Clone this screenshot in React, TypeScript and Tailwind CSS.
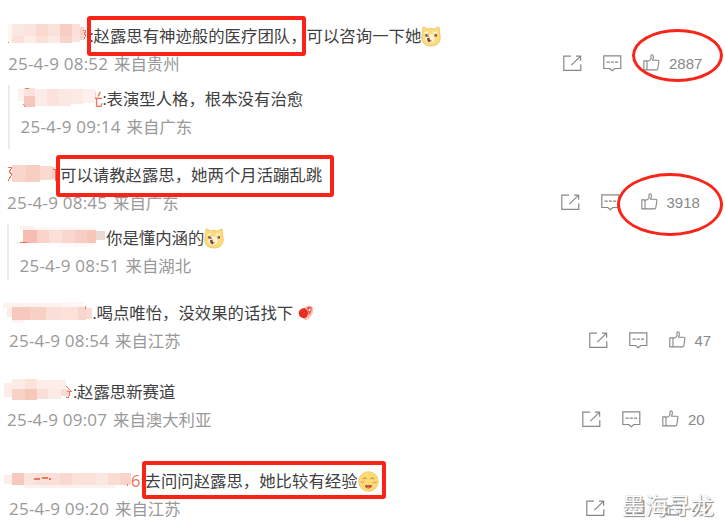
import type { ReactNode } from "react";

type Tile = [x: number, y: number, w: number, h: number, color: string];

function Mosaic({ tiles, children }: { tiles: Tile[]; children?: ReactNode }) {
  return (
    <svg className="h-7 w-full" shapeRendering="crispEdges" aria-hidden="true">
      {tiles.map(([x, y, w, h, color], i) => (
        <rect key={i} x={x} y={y} width={w} height={h} fill={color} />
      ))}
      {children}
    </svg>
  );
}

function DogeIcon() {
  return (
    <svg className="h-[21px] w-5 shrink-0" viewBox="0 0 20 21">
      <path
        d="M1.2 8 L2 1.2 Q3 .2 6.2 3 Q10 1.8 14 3 Q17 .2 18 1.2 L18.8 8 Q20 12 18.5 15.5 Q16 20 10 20 Q4 20 1.4 15.5 Q0 12 1.2 8Z"
        fill="#fbdc7c"
        stroke="#edc05e"
        strokeWidth=".8"
      />
      <ellipse cx="9" cy="12.5" rx="4.8" ry="4.6" fill="#fff3d2" />
      <path d="M3.4 7 7 6M11.8 6.4 16 6.6" stroke="#fff6dd" strokeWidth="1.6" />
      <path d="M4 8.2h3.6v2.6H4.6zM12.8 8.2h3.2v2.4h-2.6z" fill="#8c4a3a" />
      <path d="M6.4 8.2h1.2v1.2H6.4zM12.6 8.2h1.2v1.2h-1.2z" fill="#fff" />
      <path d="M6 12.2 8.8 11.6 8.4 13.2 10 14.8 8.6 16.4 6.4 15Z" fill="#7d4232" />
      <path d="M9.4 14 11 15.2" stroke="#d98c74" strokeWidth="1" />
    </svg>
  );
}

function SmileIcon() {
  return (
    <svg className="h-[21px] w-[21px] shrink-0" viewBox="0 0 21 21">
      <circle cx="10.5" cy="10.5" r="9.8" fill="#fcdb75" stroke="#eec468" strokeWidth=".8" />
      <path d="M5 8Q6.8 5.6 8.4 7.8M12.6 7.8Q14.2 5.6 16 8" fill="none" stroke="#9b6b3a" strokeWidth=".9" />
      <path d="m2.6 12 1.4-1.8M4.6 12.4 6 10.4M15 12.4l1.4-2M17 12.4l1.4-2" stroke="#f28563" strokeWidth="1" />
      <path d="M6.8 14.2h7.4q-1 3.2-3.7 3.2T6.8 14.2Z" fill="#b8402f" />
      <path d="M8.4 16.2q2.1-1.2 4.2 0-2.1 1.8-4.2 0Z" fill="#f4685b" />
    </svg>
  );
}

function MeatIcon() {
  return (
    <svg className="ml-[5px] h-4 w-4 shrink-0" viewBox="0 0 16 16">
      <path d="M1 7Q2 3.5 6 3Q8 .8 11.5 .6Q15.4 1.4 15.4 5Q15 10 10.6 14Q7 16.4 5 13.4Q.2 11 1 7Z" fill="#fbc2b7" />
      <path d="M.8 6.8Q2.6 2.8 6.8 3.2Q10 5 10 8Q9.8 12.4 6.6 13.2Q1.6 12.8 .8 9Z" fill="#e92c20" />
      <path d="M8.6 3Q11 .8 13.4 2.2Q14.6 6 10.6 10.6Q11 5.4 8.6 3Z" fill="#e94b3e" />
      <path d="m10.6 4.2 1.8-1 .2 2-1.4 1.4Z" fill="#fff" />
      <path d="m3 7 2-2M5 9l2-2" stroke="#f9604f" strokeWidth=".7" />
    </svg>
  );
}

function ShareIcon() {
  return (
    <svg className="h-[17px] w-[19px]" viewBox="0 0 19 17" fill="none" stroke="#888" strokeWidth="1.2">
      <path d="M8 1.2H.8v14.2h17V9.2M13 1.2h4.6v4.6M8.3 10.1 17.4 1.4" />
    </svg>
  );
}

function CommentIcon() {
  return (
    <svg className="h-[17px] w-[19px]" viewBox="0 0 19 17" fill="none" stroke="#888" strokeWidth="1.2">
      <path d="M.8.9h17v12.6h-6l-2.5 2.3-2.5-2.3h-6ZM3.6 7.2h3.1M7.8 7.2h3.1M12 7.2h3.1" />
    </svg>
  );
}

function LikeIcon() {
  return (
    <svg
      className="h-[17px] w-[17px]"
      viewBox="0 0 17 17"
      fill="none"
      stroke="#888"
      strokeWidth="1.1"
      strokeLinejoin="round"
    >
      <path d="M.8 6.9H4v9H.8ZM4 7.4 6.7 6.5 8 4.6V2Q8 .7 9.1.8T10.3 2.2V4L9.5 6.2h5.1q1.5.2 1.3 1.5l-1.1 7q-.3 1.2-1.4 1.2H4" />
    </svg>
  );
}

function Actions({ likes }: { likes: string }) {
  return (
    <div className="flex h-7 items-center">
      <span className="-mt-0.5 flex">
        <ShareIcon />
      </span>
      <span className="-mt-0.5 ml-[21px] flex">
        <CommentIcon />
      </span>
      <span className="-mt-[3px] ml-[21px] flex">
        <LikeIcon />
      </span>
      <span className="ml-[9px] font-['Liberation_Sans',sans-serif] text-[15px] text-[#888]">{likes}</span>
    </div>
  );
}

type CommentProps = {
  className: string;
  nameWidth: string;
  name: ReactNode;
  sep?: string;
  text: string;
  emoji?: ReactNode;
  dateClass: string;
  time: string;
  place: string;
  likes?: string;
};

function Comment({ className, nameWidth, name, sep, text, emoji, dateClass, time, place, likes }: CommentProps) {
  return (
    <section className={className}>
      <div className="flex h-7 items-center text-[16.4px] leading-7 text-[#404040]">
        <div className={`${nameWidth} flex h-7 shrink-0 justify-end`}>
          <div className="h-7 w-full min-w-0">{name}</div>
          {sep && <span className="w-1 shrink-0 text-center">{sep}</span>}
        </div>
        <span>{text}</span>
        {emoji}
      </div>
      <div className="flex h-7 items-center">
        <div className={`${dateClass} flex shrink-0 text-[#999]`}>
          <span className="w-[106px] text-[17px] leading-7 tracking-[0.22px]">{time}</span>
          <span className="text-[16.4px] leading-7">{place}</span>
        </div>
        {likes && <Actions likes={likes} />}
      </div>
    </section>
  );
}

export default function App() {
  return (
    <main className="relative flex h-[530px] w-[725px] flex-col overflow-hidden bg-white font-['Open_Sans','Noto_Sans_CJK_SC',sans-serif] whitespace-nowrap">
      <Comment
        className="mt-[22px]"
        nameWidth="w-[93.5px]"
        sep=":"
        name={
          <Mosaic
            tiles={[
              [8, 2, 4, 18, "#fef5f2"],
              [12, 2, 12, 12, "#fce8e3"], [24, 2, 12, 12, "#fbe4de"], [36, 2, 12, 12, "#f9d9d0"],
              [48, 2, 12, 12, "#fbe3dc"], [60, 2, 12, 12, "#f7cec3"], [72, 2, 8, 12, "#fae0d9"],
              [80, 5, 4, 13, "#f8d3c9"],
              [12, 14, 12, 7, "#fbe1da"], [24, 14, 12, 7, "#fdece7"], [36, 14, 12, 7, "#fbe1da"],
              [48, 14, 12, 7, "#fceae6"], [60, 14, 12, 7, "#f8d5cb"], [72, 14, 8, 6, "#fbe4de"],
            ]}
          >
            <path d="m83 8 3 1-2 3 2 1-2 4M8 20h1" fill="none" stroke="#ea7558" />
          </Mosaic>
        }
        text="赵露思有神迹般的医疗团队，可以咨询一下她"
        emoji={<DogeIcon />}
        dateClass="w-[563px] pl-2"
        time="25-4-9 08:52"
        place="来自贵州"
        likes="2887"
      />

      <Comment
        className="mt-[7px] ml-2 border-l-2 border-[#ececec] pb-2"
        nameWidth="w-[96.5px]"
        sep=":"
        name={
          <div className="flex">
            <span className="-mr-[93px] w-[93px] shrink-0 text-right text-[#ed6b4d]">光</span>
            <div className="relative w-[92px] shrink-0">
              <Mosaic
                tiles={[
                  [8, 4, 6, 12, "#fdf0ed"], [14, 3, 11, 8, "#fbe3dc"], [14, 11, 11, 11, "#f6c8bb"],
                  [25, 4, 12, 17, "#fcebe7"], [37, 4, 12, 17, "#fbe3dc"], [49, 4, 12, 17, "#fce8e2"],
                  [61, 4, 12, 15, "#fceae6"], [73, 4, 12, 14, "#fdf1ee"], [73, 18, 11, 5, "#fff"],
                ]}
              >
                <path d="m15 4 4-1M13 19l3 3" stroke="#eb7c60" />
              </Mosaic>
            </div>
          </div>
        }
        text="表演型人格，根本没有治愈"
        dateClass="pl-[10.5px]"
        time="25-4-9 09:14"
        place="来自广东"
      />

      <Comment
        className="mt-3"
        nameWidth="w-[60px]"
        name={
          <Mosaic
            tiles={[
              [12, 4, 14, 17, "#f9d5cc"], [26, 4, 14, 17, "#f8cdc2"], [40, 5, 12, 14, "#fad9d1"],
              [52, 6, 3, 12, "#f9cec4"],
            ]}
          >
            <path d="m8 6 4 1-3 4 3 2-4 7M53 8h2v12" fill="none" stroke="#ec7153" />
          </Mosaic>
        }
        text="可以请教赵露思，她两个月活蹦乱跳"
        dateClass="w-[560.5px] pl-[7px]"
        time="25-4-9 08:45"
        place="来自广东"
        likes="3918"
      />

      <Comment
        className="mt-[7px] ml-[7px] border-l-2 border-[#ececec]"
        nameWidth="w-[97px]"
        name={
          <Mosaic
            tiles={[
              [11, 2, 14, 4, "#fdf0ec"], [25, 3, 62, 4, "#fef7f5"],
              [14, 6, 14, 13, "#f5beb1"], [28, 6, 12, 13, "#f8d3c9"], [40, 6, 13, 13, "#fae0d9"],
              [53, 6, 13, 13, "#f9d7cf"], [66, 6, 12, 13, "#f8cec4"], [78, 6, 9, 13, "#f6c6ba"],
              [87, 7, 9, 9, "#ead9d4"], [50, 19, 35, 4, "#fef8f6"],
            ]}
          >
            <path d="M11 18h7" stroke="#ea6b4c" />
          </Mosaic>
        }
        text="你是懂内涵的"
        emoji={<DogeIcon />}
        dateClass="pl-[10.5px]"
        time="25-4-9 08:51"
        place="来自湖北"
      />

      <Comment
        className="mt-[19px]"
        nameWidth="w-[96.5px]"
        sep="."
        name={
          <Mosaic
            tiles={[
              [3, 4, 60, 5, "#fef2ef"], [63, 3, 21, 6, "#fef7f5"],
              [7, 9, 6, 9, "#fdece7"], [12, 8, 18, 13, "#f7c9be"], [30, 8, 16, 13, "#f8d0c6"],
              [46, 8, 15, 13, "#fadfd8"], [61, 8, 17, 13, "#fbe1da"], [78, 8, 8, 13, "#f9d6cd"],
              [86, 9, 6, 11, "#f7dcd4"], [12, 21, 12, 3, "#fef5f2"],
            ]}
          >
            <path d="M85 7v3" stroke="#ee8068" />
          </Mosaic>
        }
        text="喝点唯怡，没效果的话找下"
        emoji={<MeatIcon />}
        dateClass="w-[588.5px] pl-[9px]"
        time="25-4-9 08:54"
        place="来自江苏"
        likes="47"
      />

      <Comment
        className="mt-[23px]"
        nameWidth="w-[77px]"
        sep=":"
        name={
          <Mosaic
            tiles={[
              [4, 5, 8, 14, "#fdece8"], [12, 1, 13, 10, "#fcebe6"], [25, 1, 12, 10, "#fbe2db"],
              [37, 2, 12, 9, "#fdece7"], [49, 2, 17, 9, "#fdeeea"],
              [12, 11, 13, 11, "#f8d1c7"], [25, 11, 12, 11, "#f6c7bb"], [37, 11, 11, 10, "#fadfd8"],
              [48, 11, 13, 10, "#fceae5"], [61, 11, 8, 7, "#fadbd2"],
            ]}
          >
            <path d="M66 8q4 4 5 5h-4M70 13q0 7-4 7" fill="none" stroke="#ee7355" />
          </Mosaic>
        }
        text="赵露思新赛道"
        dateClass="w-[582px] pl-[7px]"
        time="25-4-9 09:07"
        place="来自澳大利亚"
        likes="20"
      />

      <Comment
        className="mt-[33px]"
        nameWidth="w-[144.5px]"
        sep=":"
        name={
          <div className="flex">
            <div className="w-[131px] shrink-0">
              <Mosaic
                tiles={[
                  [4, 8, 8, 9, "#fdeeea"], [12, 6, 12, 12, "#f7c9be"], [24, 6, 12, 12, "#fbe4dd"],
                  [36, 6, 24, 12, "#fae0d8"], [60, 6, 12, 12, "#f9d8cf"], [72, 6, 12, 12, "#fbe3dc"],
                  [84, 6, 12, 12, "#fae1da"], [96, 6, 12, 12, "#fbe7e1"], [108, 6, 12, 12, "#fadcd4"],
                  [120, 6, 13, 12, "#f8d4ca"], [24, 18, 92, 3, "#fdf1ee"],
                ]}
              >
                <path d="M34 12h6M42 11h6M49 12h2M127 18h1" stroke="#e9785c" strokeWidth="1.5" />
              </Mosaic>
            </div>
            <span className="text-[16.4px] text-[#ed7356]">6</span>
          </div>
        }
        text="去问问赵露思，她比较有经验"
        emoji={<SmileIcon />}
        dateClass="w-[586px] pl-[9px]"
        time="25-4-9 09:20"
        place="来自江苏"
        likes="43"
      />

      {/* Hand-drawn highlights */}
      <div className="absolute top-4 left-[87px] h-10 w-[219px] rounded-[3px] border-4 border-[#fb2318]" />
      <div className="absolute top-[155px] left-14 h-[42px] w-[278px] rounded-[3px] border-4 border-[#fb2318]" />
      <div className="absolute top-[461px] left-[142px] h-[38px] w-[244px] rounded-[3px] border-4 border-[#fb2318]" />
      <div className="absolute top-[29px] left-[632px] h-[53px] w-[91px] rounded-[50%] border-3 border-[#f9251a]" />
      <div className="absolute top-[173px] left-[617px] h-[63px] w-[106px] rounded-[50%] border-3 border-[#f9251a]" />

      <div className="absolute top-[487px] left-[622px] font-['Noto_Sans_CJK_SC',sans-serif] text-[23px] leading-[34px] text-white [text-shadow:1px_1px_1px_#888,0_0_1px_#bbb]">
        墨海寻龙
      </div>
    </main>
  );
}
